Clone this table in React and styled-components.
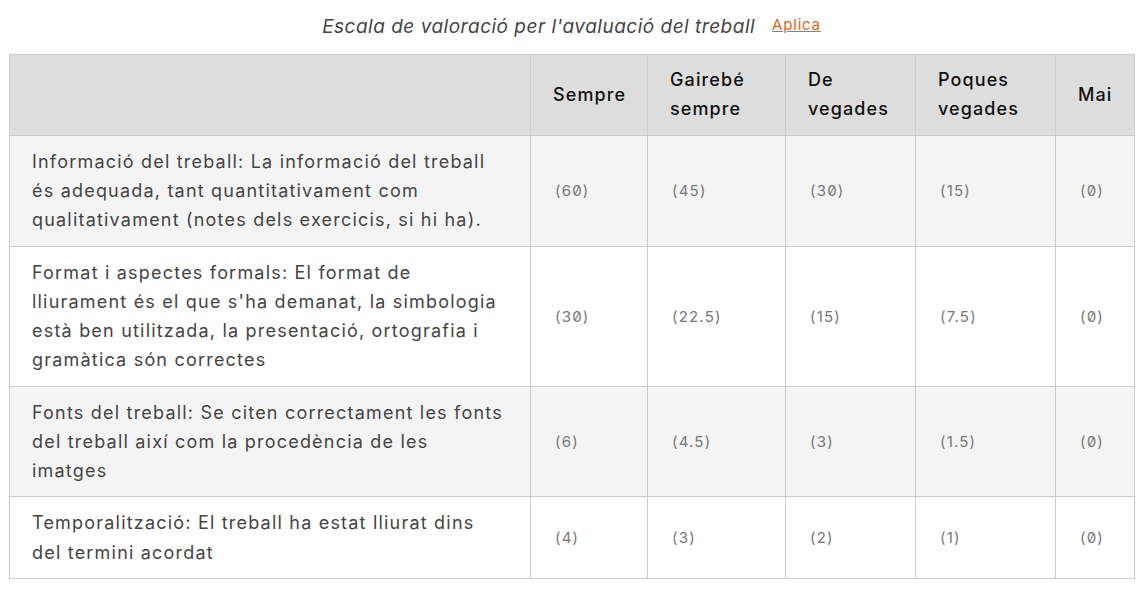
import React from "react";
import styled, { createGlobalStyle } from "styled-components";

const Global = createGlobalStyle`
  html, body { margin: 0; padding: 0; background: #fff; }
  body { font-family: Inter, "Noto Sans", sans-serif; }
`;

const Page = styled.div`
  padding: 0 13px 0 9px;
`;

const TitleBar = styled.div`
  height: 54px;
  display: flex;
  align-items: center;
  justify-content: center;
  gap: 17px;
  padding-bottom: 1px;
  box-sizing: border-box;
`;

const Title = styled.span`
  font-style: italic;
  font-size: 19px;
  letter-spacing: 0.5px;
  color: #444;
`;

const Link = styled.a`
  font-size: 15px;
  letter-spacing: 0.8px;
  color: #d2691e;
  text-decoration: underline;
  position: relative;
  top: -2px;
`;

const Table = styled.table`
  width: 1125px;
  border-collapse: collapse;
  table-layout: fixed;
`;

const HeadCell = styled.th`
  background: #dddddd;
  border: 1px solid #cccccc;
  padding: 10px 22px 12px;
  font-size: 18px;
  letter-spacing: 1.1px;
  line-height: 29px;
  font-weight: 500;
  color: #111;
  text-align: left;
  vertical-align: middle;
`;

const Row = styled.tr`
  background: ${(p) => (p.$odd ? "#f4f4f4" : "#ffffff")};
`;

const Criterion = styled.td`
  border: 1px solid #cccccc;
  padding: 11px 22px 11.5px;
  font-size: 18px;
  letter-spacing: 1.2px;
  line-height: 29.1px;
  color: #444;
  vertical-align: middle;
`;

const Score = styled.td`
  border: 1px solid #cccccc;
  padding: 11px 22px 11px 24px;
  font-size: 15px;
  letter-spacing: 1.2px;
  color: #777;
  vertical-align: middle;
  font-feature-settings: "zero" 1;
`;

const widths = [521, 117, 138, 130, 140, 79];
const heads = ["", "Sempre", "Gairebé sempre", "De vegades", "Poques vegades", "Mai"];

const rows = [
  {
    text: "Informació del treball: La informació del treball és adequada, tant quantitativament com qualitativament (notes dels exercicis, si hi ha).",
    scores: ["60", "45", "30", "15", "0"],
  },
  {
    text: "Format i aspectes formals: El format de lliurament és el que s'ha demanat, la simbologia està ben utilitzada, la presentació, ortografia i gramàtica són correctes",
    scores: ["30", "22.5", "15", "7.5", "0"],
  },
  {
    text: "Fonts del treball: Se citen correctament les fonts del treball així com la procedència de les imatges",
    scores: ["6", "4.5", "3", "1.5", "0"],
  },
  {
    text: "Temporalització: El treball ha estat lliurat dins del termini acordat",
    scores: ["4", "3", "2", "1", "0"],
  },
];

export default function App() {
  return (
    <Page>
      <Global />
      <TitleBar>
        <Title>Escala de valoració per l'avaluació del treball</Title>
        <Link href="#">Aplica</Link>
      </TitleBar>
      <Table>
        <colgroup>
          {widths.map((w, i) => (
            <col key={i} style={{ width: w }} />
          ))}
        </colgroup>
        <thead>
          <tr>
            {heads.map((h, i) => (
              <HeadCell key={i}>{h}</HeadCell>
            ))}
          </tr>
        </thead>
        <tbody>
          {rows.map((r, i) => (
            <Row key={i} $odd={i % 2 === 0}>
              <Criterion>{r.text}</Criterion>
              {r.scores.map((s, j) => (
                <Score key={j}>({s})</Score>
              ))}
            </Row>
          ))}
        </tbody>
      </Table>
    </Page>
  );
}
